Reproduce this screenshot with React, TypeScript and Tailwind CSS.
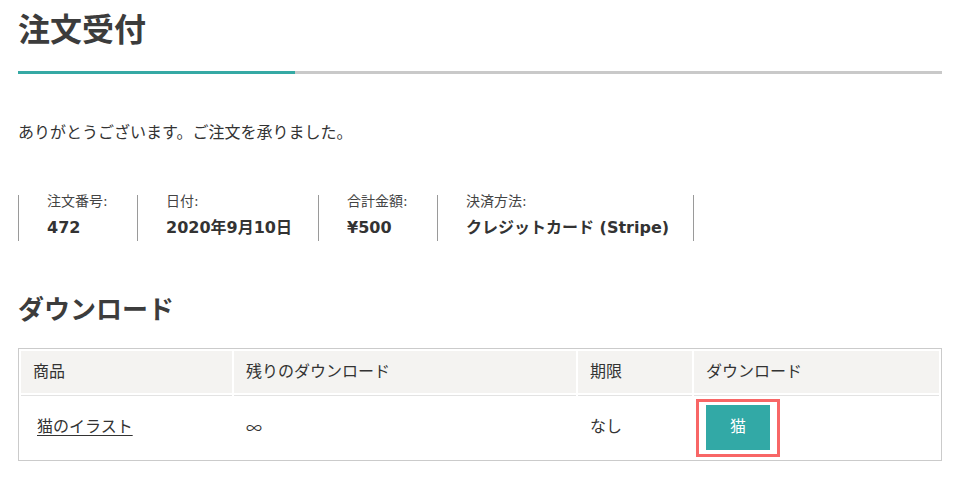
import React from "react";

export default function App() {
  const items = [
    { label: "注文番号:", value: "472", w: "w-[119px]" },
    { label: "日付:", value: "2020年9月10日", w: "w-[181px]" },
    { label: "合計金額:", value: "¥500", w: "w-[119px]" },
    { label: "決済方法:", value: "クレジットカード (Stripe)", w: "w-[257px]" },
  ];
  return (
    <div
      className="min-h-[485px] bg-white px-[18px] pr-[17px] text-[#333]"
      style={{ fontFamily: '"DejaVu Sans", "Noto Sans CJK JP", sans-serif' }}
    >
      <h1 className="pt-[10px] text-[32px] font-bold leading-[40px] text-[#3c3c3c]">注文受付</h1>
      <div className="mt-[21px] flex h-[3px]">
        <div className="w-[30%] bg-[#35a9a4]" />
        <div className="flex-1 bg-[#c9c9c9]" />
      </div>
      <p className="mt-[47px] text-[16px] leading-[24px]">
        ありがとうございます。ご注文を承りました。
      </p>
      <ul className="mt-[50px] flex">
        {items.map((it, i) => (
          <li
            key={it.label}
            className={
              it.w +
              " shrink-0 whitespace-nowrap border-l border-[#9a9a9a] pl-[28px] pb-[3px] " +
              (i === items.length - 1 ? "border-r" : "")
            }
          >
            <div className="text-[14px] leading-[12px] text-[#444]">{it.label}</div>
            <div className="mt-[11px] text-[16px] font-bold leading-[20px] text-[#333]">{it.value}</div>
          </li>
        ))}
      </ul>
      <h2 className="mt-[53px] text-[26px] font-bold leading-[32px] text-[#3c3c3c]">ダウンロード</h2>
      <table className="mt-[22px] w-full table-fixed border-separate border-spacing-[2px] border border-[#cbcbcb] text-[16px]">
        <colgroup>
          <col className="w-[211px]" />
          <col className="w-[342px]" />
          <col className="w-[114px]" />
          <col className="w-[245px]" />
        </colgroup>
        <thead>
          <tr>
            {["商品", "残りのダウンロード", "期限", "ダウンロード"].map((h) => (
              <th
                key={h}
                className="bg-[#f4f3f1] px-[12px] py-[9px] text-left font-normal leading-[24px] text-[#333]"
              >
                {h}
              </th>
            ))}
          </tr>
        </thead>
        <tbody>
          <tr>
            <td className="border-t border-[#e3e3e3] px-[12px] py-[19px] align-middle leading-[24px]">
              <a href="#" className="ml-[4px] text-[#333] underline underline-offset-[3px]">
                猫のイラスト
              </a>
            </td>
            <td
              className="border-t border-[#e3e3e3] px-[12px] py-[19px] align-middle leading-[24px]"
              style={{ fontFamily: '"Noto Sans CJK JP", sans-serif' }}
            >
              ∞
            </td>
            <td className="border-t border-[#e3e3e3] px-[12px] py-[19px] align-middle leading-[24px]">なし</td>
            <td className="border-t border-[#e3e3e3] px-[12px] py-[8px] align-middle">
              <span className="relative inline-flex h-[45px] w-[64px] items-center justify-center bg-[#32a9a6] text-[16px] leading-[24px] text-white">
                猫
                <span className="pointer-events-none absolute -bottom-[7px] -left-[10px] -right-[10px] -top-[6px] border-[3px] border-[#f86666]" />
              </span>
            </td>
          </tr>
        </tbody>
      </table>
    </div>
  );
}
